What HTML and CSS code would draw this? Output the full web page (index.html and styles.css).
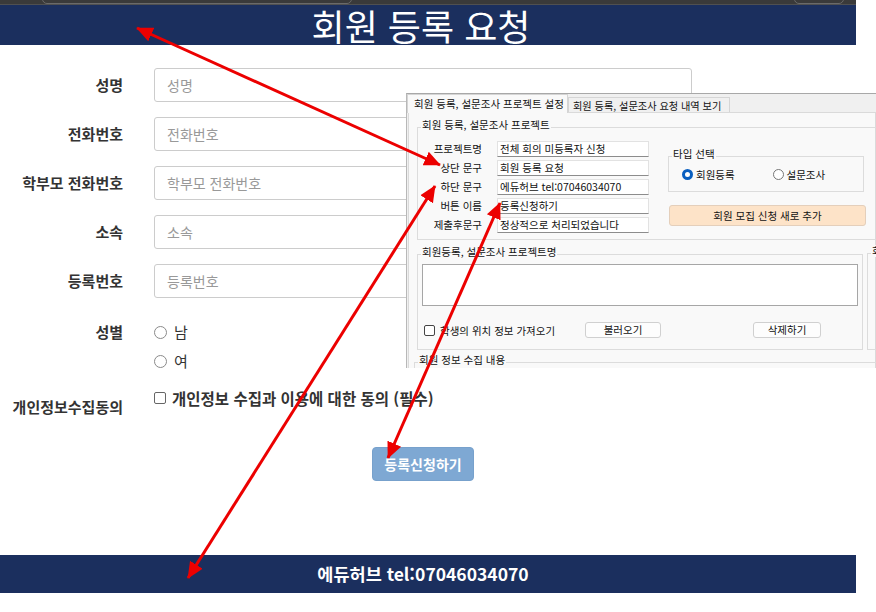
FILE: index.html
```html
<!DOCTYPE html>
<html lang="ko">
<head>
<meta charset="utf-8">
<title>회원 등록 요청</title>
<link rel="stylesheet" href="styles.css">
</head>
<body>
<div class="chrome">
  <div class="chrome-pill"></div>
  <div class="chrome-pill chrome-pill-right"></div>
</div>
<div class="page">
  <header class="site-header"><h1>회원 등록 요청</h1></header>
  <form class="reg-form">
    <div class="row"><span class="lbl">성명</span><div class="ctl">성명</div></div>
    <div class="row"><span class="lbl">전화번호</span><div class="ctl">전화번호</div></div>
    <div class="row"><span class="lbl">학부모 전화번호</span><div class="ctl">학부모 전화번호</div></div>
    <div class="row"><span class="lbl">소속</span><div class="ctl">소속</div></div>
    <div class="row"><span class="lbl">등록번호</span><div class="ctl">등록번호</div></div>
    <div class="row row-radio">
      <span class="lbl">성별</span>
      <div class="opts">
        <div class="opt"><span class="radio"></span>남</div>
        <div class="opt"><span class="radio"></span>여</div>
      </div>
    </div>
    <div class="row row-check">
      <span class="lbl">개인정보수집동의</span>
      <div class="opt opt-bold"><span class="check"></span>개인정보 수집과 이용에 대한 동의 (필수)</div>
    </div>
    <div class="row row-btn">
      <button type="button" class="submit">등록신청하기</button>
    </div>
  </form>
  <footer class="site-footer">에듀허브 tel:07046034070</footer>
</div>

<div class="win">
  <div class="tabs">
    <div class="tab tab-active">회원 등록, 설문조사 프로젝트 설정</div>
    <div class="tab">회원 등록, 설문조사 요청 내역 보기</div>
  </div>
  <div class="tabpage">
    <div class="grp grp1">
      <span class="grp-title">회원 등록, 설문조사 프로젝트</span>
      <div class="fields">
        <span class="fld-lbl">프로젝트명</span><div class="tb">전체 회의 미등록자 신청</div>
        <span class="fld-lbl">상단 문구</span><div class="tb">회원 등록 요청</div>
        <span class="fld-lbl">하단 문구</span><div class="tb">에듀허브 tel:07046034070</div>
        <span class="fld-lbl">버튼 이름</span><div class="tb">등록신청하기</div>
        <span class="fld-lbl">제출후문구</span><div class="tb">정상적으로 처리되었습니다</div>
      </div>
      <div class="side">
        <div class="grp type-grp">
          <span class="grp-title">타입 선택</span>
          <div class="type-opts">
            <div class="wopt"><span class="wradio wradio-on"></span>회원등록</div>
            <div class="wopt"><span class="wradio"></span>설문조사</div>
          </div>
        </div>
        <div class="peach-btn">회원 모집 신청 새로 추가</div>
      </div>
    </div>
    <div class="lower">
      <div class="grp grp2">
        <span class="grp-title">회원등록, 설문조사 프로젝트명</span>
        <div class="list"></div>
        <div class="ctrl-row">
          <div class="wcheck-lbl"><span class="wcheck"></span>학생의 위치 정보 가져오기</div>
          <div class="wbtn wbtn-load">불러오기</div>
          <div class="wbtn wbtn-del">삭제하기</div>
        </div>
      </div>
      <div class="grp grp3"><span class="grp-title">회</span></div>
    </div>
    <div class="grp grp4"><span class="grp-title">회원 정보 수집 내용</span></div>
  </div>
</div>

<svg class="arrows" width="876" height="612" viewBox="0 0 876 612">
  <defs>
    <marker id="ah" viewBox="0 0 10 10" refX="9.5" refY="5" markerWidth="5.5" markerHeight="5.5" orient="auto-start-reverse">
      <path d="M0,0.5 L10,5 L0,9.5 z" fill="#ec0000"/>
    </marker>
  </defs>
  <line x1="137" y1="28" x2="440" y2="165" stroke="#ec0000" stroke-width="3" marker-start="url(#ah)" marker-end="url(#ah)"/>
  <line x1="188" y1="578" x2="435" y2="186" stroke="#ec0000" stroke-width="3" marker-start="url(#ah)" marker-end="url(#ah)"/>
  <line x1="500" y1="203" x2="388" y2="458" stroke="#ec0000" stroke-width="3" marker-start="url(#ah)" marker-end="url(#ah)"/>
</svg>
</body>
</html>
```

FILE: styles.css
```css
html, body {
  margin: 0;
  padding: 0;
}
body {
  width: 876px;
  height: 612px;
  position: relative;
  overflow: hidden;
  background: #fff;
  font-family: "Noto Sans CJK KR", "Noto Sans", sans-serif;
}

/* browser chrome strip */
.chrome {
  width: 856px;
  height: 5px;
  background: #3a3a3a;
  display: flex;
  padding-left: 42px;
  box-sizing: border-box;
  overflow: hidden;
  border-bottom: 1px solid #505050;
}
.chrome-pill {
  width: 310px;
  height: 10px;
  margin-top: -6px;
  border: 1px solid #6a6a6a;
  border-radius: 6px;
  box-sizing: border-box;
}
.chrome-pill-right {
  width: 50px;
  margin-left: auto;
  margin-right: 12px;
}

.page {
  width: 856px;
}
.site-header {
  height: 40px;
  background: #1b2f5e;
  color: #fff;
  display: flex;
  align-items: center;
  justify-content: center;
  padding-right: 14px;
}
.site-header h1 {
  margin: 0;
  font-size: 36px;
  font-weight: 400;
  line-height: 40px;
  letter-spacing: 0;
}

.reg-form {
  padding: 23px 0 74px;
}
.row {
  display: grid;
  grid-template-columns: 123px 538px;
  column-gap: 31px;
  margin-bottom: 15px;
}
.lbl {
  text-align: right;
  font-weight: 700;
  font-size: 15px;
  color: #333;
  line-height: 20px;
  padding-top: 7px;
  white-space: nowrap;
}
.ctl {
  height: 34px;
  border: 1px solid #ccc;
  border-radius: 3px;
  padding: 0 12px;
  font-size: 14px;
  color: #999;
  line-height: 32px;
  box-sizing: border-box;
}
.row-radio {
  margin-bottom: 17px;
}
.row-radio .lbl,
.row-check .lbl {
  padding-top: 9px;
}
.opts {
  display: flex;
  flex-direction: column;
  gap: 9px;
  padding-top: 9px;
}
.opt {
  display: flex;
  align-items: center;
  gap: 7px;
  font-size: 15px;
  line-height: 20px;
  color: #333;
}
.opt-bold {
  font-weight: 700;
  font-size: 15.5px;
  gap: 6px;
  align-self: start;
  white-space: nowrap;
}
.radio {
  width: 13px;
  height: 13px;
  border: 1px solid #8a8a8a;
  border-radius: 50%;
  box-sizing: border-box;
}
.check {
  width: 12px;
  height: 12px;
  border: 1px solid #666;
  border-radius: 2px;
  box-sizing: border-box;
}
.row-check {
  margin-bottom: 30px;
}
.row-btn {
  margin-bottom: 0;
}
.submit {
  grid-column: 2;
  justify-self: center;
  width: 102px;
  height: 34px;
  background: #7ea8d3;
  border: 1px solid #77a1cc;
  border-radius: 4px;
  color: #fff;
  font-family: inherit;
  font-weight: 700;
  font-size: 14px;
  padding: 0;
}
.site-footer {
  height: 38px;
  line-height: 38px;
  background: #1b2f5e;
  color: #fff;
  font-size: 17.5px;
  font-weight: 700;
  text-align: center;
  padding-right: 10px;
}

/* Windows dialog screenshot */
.win {
  position: absolute;
  left: 406px;
  top: 93px;
  width: 470px;
  height: 275px;
  overflow: hidden;
  background: #f0f0f0;
  border-top: 1px solid #a8a8a8;
  border-left: 1px solid #b8b8b8;
  box-sizing: border-box;
  font-size: 10.5px;
  color: #111;
}
.tabs {
  display: flex;
  align-items: flex-end;
  height: 18px;
}
.tab {
  width: 162px;
  height: 15px;
  padding: 0 3px 0 4px;
  border: 1px solid #d5d5d5;
  border-bottom: none;
  background: #f0f0f0;
  line-height: 15px;
  font-size: 10.2px;
  white-space: nowrap;
  box-sizing: border-box;
  overflow: hidden;
}
.tab-active {
  width: 161px;
  height: 19px;
  padding: 0 6px;
  line-height: 18px;
  font-size: 10.5px;
  background: #f9f9f9;
  margin-bottom: -1px;
  position: relative;
  z-index: 1;
}
.tabpage {
  margin-left: 1px;
  height: 260px;
  background: #f9f9f9;
  border: 1px solid #dadada;
  box-sizing: border-box;
}
.grp {
  position: relative;
  border: 1px solid #dcdcdc;
  box-sizing: border-box;
}
.grp-title {
  position: absolute;
  top: -9px;
  left: 3px;
  padding: 0 1px;
  background: #f9f9f9;
  line-height: 12px;
  white-space: nowrap;
}
.grp1 {
  margin: 14px 0 0 8px;
  width: 480px;
  height: 113px;
  display: flex;
  align-items: flex-start;
  padding-top: 13px;
}
.fields {
  display: grid;
  grid-template-columns: 64px 152px;
  column-gap: 15px;
  row-gap: 3px;
  align-items: center;
}
.fld-lbl {
  text-align: right;
  line-height: 16px;
  white-space: nowrap;
}
.tb {
  height: 16px;
  background: #fff;
  border: 1px solid #e2e2e2;
  border-bottom-color: #8c8c8c;
  padding-left: 2px;
  line-height: 14px;
  box-sizing: border-box;
  white-space: nowrap;
  overflow: hidden;
}
.side {
  margin: 15px 0 0 19px;
  width: 198px;
}
.type-grp {
  height: 36px;
  width: 196px;
}
.type-opts {
  display: flex;
  padding: 11px 0 0 13px;
}
.wopt {
  width: 94px;
  display: flex;
  align-items: center;
  gap: 3px;
  line-height: 13px;
}
.wradio {
  width: 11px;
  height: 11px;
  border: 1px solid #777;
  border-radius: 50%;
  box-sizing: border-box;
  background: #fff;
}
.wradio-on {
  border: 3px solid #0a5fc0;
}
.peach-btn {
  margin: 13px 0 0 1px;
  width: 197px;
  height: 21px;
  background: #fde3c8;
  border: 1px solid #e4cfbb;
  border-radius: 3px;
  box-sizing: border-box;
  text-align: center;
  line-height: 19px;
}
.lower {
  display: flex;
  gap: 4px;
  margin: 14px 0 0 8px;
}
.grp2 {
  width: 446px;
  height: 96px;
  flex: none;
}
.list {
  margin: 9px 0 0 4px;
  width: 436px;
  height: 42px;
  background: #fff;
  border: 1px solid #a6a6a6;
  box-sizing: border-box;
}
.ctrl-row {
  display: flex;
  align-items: center;
  margin-top: 16px;
  padding-left: 6px;
  height: 16px;
}
.wcheck-lbl {
  width: 161px;
  display: flex;
  align-items: center;
  gap: 5px;
  white-space: nowrap;
}
.wcheck {
  width: 11px;
  height: 11px;
  border: 1px solid #444;
  border-radius: 2px;
  box-sizing: border-box;
  background: #fff;
}
.wbtn {
  height: 16px;
  background: #fdfdfd;
  border: 1px solid #d0d0d0;
  border-radius: 3px;
  box-sizing: border-box;
  text-align: center;
  line-height: 14px;
}
.wbtn-load {
  width: 76px;
}
.wbtn-del {
  width: 68px;
  margin-left: 92px;
}
.grp3 {
  width: 60px;
  height: 97px;
  flex: none;
  margin-top: -1px;
}
.grp4 {
  margin: 12px 0 0 5px;
  width: 480px;
  height: 30px;
}

.arrows {
  position: absolute;
  left: 0;
  top: 0;
  pointer-events: none;
}
```
